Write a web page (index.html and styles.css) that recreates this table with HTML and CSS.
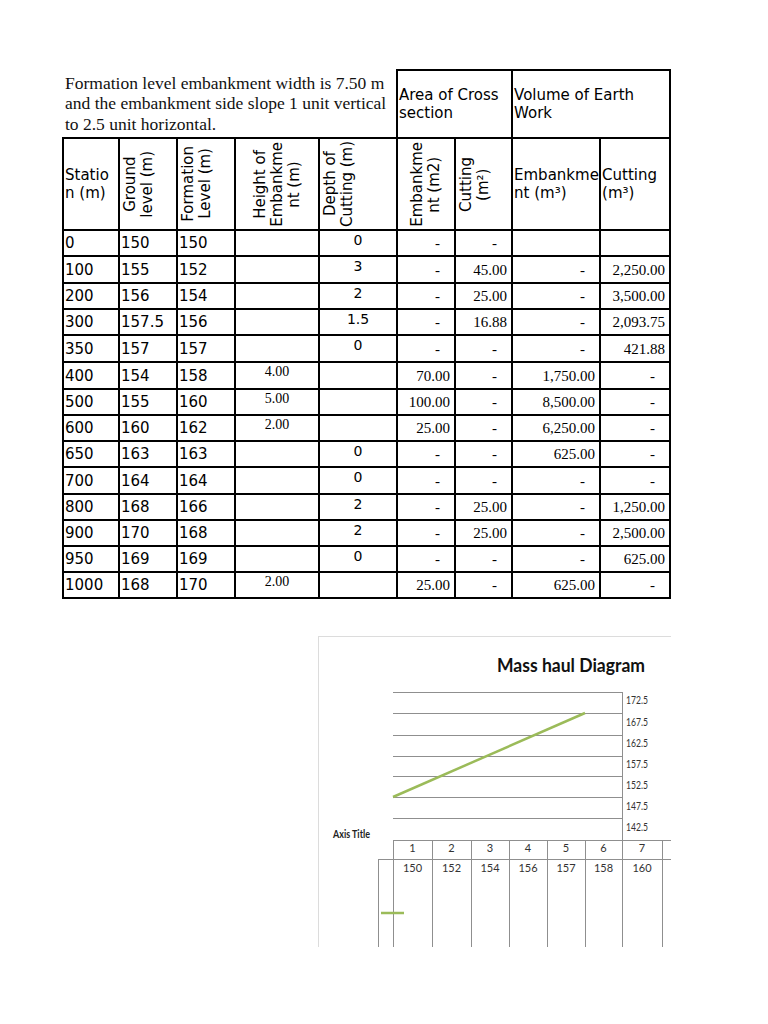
FILE: index.html
```html
<!DOCTYPE html>
<html>
<head>
<meta charset="utf-8">
<title>Mass haul</title>
<link rel="stylesheet" href="styles.css">
</head>
<body>
<table class="sheet">
  <colgroup>
    <col class="w56"><col class="w58"><col class="w58"><col class="w84"><col class="w78"><col class="w58"><col class="w57"><col class="w88"><col class="w70">
  </colgroup>
  <tr class="hrow1">
    <td colspan="5" class="note">Formation level embankment width is 7.50 m<br>and the embankment side slope 1 unit vertical<br>to 2.5 unit horizontal.</td>
    <td colspan="2" class="hd">Area of Cross<br>section</td>
    <td colspan="2" class="hd">Volume of Earth<br>Work</td>
  </tr>
  <tr class="hrow2">
    <td class="hd">Statio<br>n (m)</td>
    <td class="rot"><span class="vt">Ground<br>level (m)</span></td>
    <td class="rot"><span class="vt">Formation<br>Level (m)</span></td>
    <td class="rot mid"><span class="vt">Height of<br>Embankme<br>nt (m)</span></td>
    <td class="rot"><span class="vt">Depth of<br>Cutting (m)</span></td>
    <td class="rot mid"><span class="vt">Embankme<br>nt (m2)</span></td>
    <td class="rot"><span class="vt">Cutting<br>(m²)</span></td>
    <td class="hd">Embankme<br>nt (m³)</td>
    <td class="hd">Cutting<br>(m³)</td>
  </tr>
  <tr><td>0</td><td>150</td><td>150</td><td class="h"></td><td class="c">0</td><td class="d">-</td><td class="d">-</td><td class="n"></td><td class="n"></td></tr>
  <tr class="tall"><td>100</td><td>155</td><td>152</td><td class="h"></td><td class="c">3</td><td class="d">-</td><td class="n">45.00</td><td class="d">-</td><td class="n">2,250.00</td></tr>
  <tr><td>200</td><td>156</td><td>154</td><td class="h"></td><td class="c">2</td><td class="d">-</td><td class="n">25.00</td><td class="d">-</td><td class="n">3,500.00</td></tr>
  <tr><td>300</td><td>157.5</td><td>156</td><td class="h"></td><td class="c">1.5</td><td class="d">-</td><td class="n">16.88</td><td class="d">-</td><td class="n">2,093.75</td></tr>
  <tr class="tall"><td>350</td><td>157</td><td>157</td><td class="h"></td><td class="c">0</td><td class="d">-</td><td class="d">-</td><td class="d">-</td><td class="n">421.88</td></tr>
  <tr class="tall"><td>400</td><td>154</td><td>158</td><td class="h">4.00</td><td class="c"></td><td class="n">70.00</td><td class="d">-</td><td class="n">1,750.00</td><td class="d">-</td></tr>
  <tr><td>500</td><td>155</td><td>160</td><td class="h">5.00</td><td class="c"></td><td class="n">100.00</td><td class="d">-</td><td class="n">8,500.00</td><td class="d">-</td></tr>
  <tr><td>600</td><td>160</td><td>162</td><td class="h">2.00</td><td class="c"></td><td class="n">25.00</td><td class="d">-</td><td class="n">6,250.00</td><td class="d">-</td></tr>
  <tr><td>650</td><td>163</td><td>163</td><td class="h"></td><td class="c">0</td><td class="d">-</td><td class="d">-</td><td class="n">625.00</td><td class="d">-</td></tr>
  <tr class="tall"><td>700</td><td>164</td><td>164</td><td class="h"></td><td class="c">0</td><td class="d">-</td><td class="d">-</td><td class="d">-</td><td class="d">-</td></tr>
  <tr><td>800</td><td>168</td><td>166</td><td class="h"></td><td class="c">2</td><td class="d">-</td><td class="n">25.00</td><td class="d">-</td><td class="n">1,250.00</td></tr>
  <tr><td>900</td><td>170</td><td>168</td><td class="h"></td><td class="c">2</td><td class="d">-</td><td class="n">25.00</td><td class="d">-</td><td class="n">2,500.00</td></tr>
  <tr><td>950</td><td>169</td><td>169</td><td class="h"></td><td class="c">0</td><td class="d">-</td><td class="d">-</td><td class="d">-</td><td class="n">625.00</td></tr>
  <tr><td>1000</td><td>168</td><td>170</td><td class="h">2.00</td><td class="c"></td><td class="n">25.00</td><td class="d">-</td><td class="n">625.00</td><td class="d">-</td></tr>
</table>

<div class="chart">
  <svg class="chart-svg" width="352" height="310" viewBox="0 0 352 310">
    <text class="title" x="252" y="35" text-anchor="middle" textLength="148" lengthAdjust="spacingAndGlyphs">Mass haul Diagram</text>
    <g class="grid">
      <line x1="74" y1="55.5" x2="303" y2="55.5"/>
      <line x1="74" y1="76.5" x2="303" y2="76.5"/>
      <line x1="74" y1="98.5" x2="303" y2="98.5"/>
      <line x1="74" y1="119.5" x2="303" y2="119.5"/>
      <line x1="74" y1="139.5" x2="303" y2="139.5"/>
      <line x1="74" y1="160.5" x2="303" y2="160.5"/>
      <line x1="74" y1="181.5" x2="303" y2="181.5"/>
      <line x1="303.5" y1="55" x2="303.5" y2="310"/>
      <line x1="74" y1="203.5" x2="352" y2="203.5"/>
      <line x1="59" y1="222.5" x2="352" y2="222.5"/>
      <line x1="59.5" y1="222" x2="59.5" y2="310"/>
      <line x1="74.5" y1="203" x2="74.5" y2="310"/>
      <line x1="113.5" y1="203" x2="113.5" y2="310"/>
      <line x1="152.5" y1="203" x2="152.5" y2="310"/>
      <line x1="190.5" y1="203" x2="190.5" y2="310"/>
      <line x1="228.5" y1="203" x2="228.5" y2="310"/>
      <line x1="266.5" y1="203" x2="266.5" y2="310"/>
      <line x1="343.5" y1="203" x2="343.5" y2="310"/>
    </g>
    <line class="series" x1="74" y1="160" x2="266" y2="76"/>
    <line class="series" x1="62" y1="276" x2="85" y2="276"/>
    <g class="ylab">
      <text x="307" y="67" textLength="22" lengthAdjust="spacingAndGlyphs">172.5</text>
      <text x="307" y="89" textLength="22" lengthAdjust="spacingAndGlyphs">167.5</text>
      <text x="307" y="110" textLength="22" lengthAdjust="spacingAndGlyphs">162.5</text>
      <text x="307" y="131" textLength="22" lengthAdjust="spacingAndGlyphs">157.5</text>
      <text x="307" y="152" textLength="22" lengthAdjust="spacingAndGlyphs">152.5</text>
      <text x="307" y="173" textLength="22" lengthAdjust="spacingAndGlyphs">147.5</text>
      <text x="307" y="194" textLength="22" lengthAdjust="spacingAndGlyphs">142.5</text>
    </g>
    <text class="axis" x="14" y="201" textLength="37" lengthAdjust="spacingAndGlyphs">Axis Title</text>
    <g class="xlab">
      <text x="93.5" y="215">1</text>
      <text x="132.5" y="215">2</text>
      <text x="171" y="215">3</text>
      <text x="209" y="215">4</text>
      <text x="247" y="215">5</text>
      <text x="284.5" y="215">6</text>
      <text x="323" y="215">7</text>
      <text x="93.5" y="235">150</text>
      <text x="132.5" y="235">152</text>
      <text x="171" y="235">154</text>
      <text x="209" y="235">156</text>
      <text x="247" y="235">157</text>
      <text x="284.5" y="235">158</text>
      <text x="323" y="235">160</text>
    </g>
  </svg>
</div>
</body>
</html>
```

FILE: styles.css
```css
html, body {
  margin: 0;
  padding: 0;
  background: #fff;
}

body {
  font-family: "DejaVu Sans", sans-serif;
  color: #000;
}

.sheet {
  border-collapse: collapse;
  table-layout: fixed;
  width: 609px;
  margin: 69px 0 0 62px;
  font-family: "DejaVu Sans", sans-serif;
  font-size: 15px;
}

.w56 { width: 56px; }
.w58 { width: 58px; }
.w57 { width: 57px; }
.w84 { width: 84px; }
.w78 { width: 78px; }
.w88 { width: 88px; }
.w70 { width: 70px; }

.sheet td {
  border: 2px solid #000;
  padding: 0 1px;
  height: 24px;
  line-height: 18px;
  white-space: nowrap;
  overflow: hidden;
  vertical-align: middle;
  text-align: left;
}

.sheet tr.tall td {
  height: 25px;
}

.sheet tr.hrow1 td {
  height: 66px;
}

.sheet tr.hrow2 td {
  height: 90px;
}

.sheet td.note {
  border-top: 0 none;
  border-left: 0 none;
  padding: 0 0 0 2px;
  vertical-align: middle;
  font-family: "Liberation Serif", "Times New Roman", serif;
  font-size: 17.5px;
  line-height: 20.5px;
  color: #111;
}

.sheet td.hd {
  line-height: 18px;
}

.sheet td.rot {
  padding: 0 2px;
  text-align: left;
}

.sheet td.rot.mid {
  text-align: center;
}

.vt {
  display: inline-block;
  vertical-align: middle;
  writing-mode: vertical-rl;
  transform: rotate(180deg);
  text-align: center;
  line-height: 17px;
  white-space: nowrap;
}

.sheet td.c {
  text-align: center;
  vertical-align: top;
  padding-top: 0;
  font-size: 14px;
}

.sheet td.h {
  text-align: center;
  vertical-align: top;
  padding-top: 0;
  font-family: "Liberation Serif", "Times New Roman", serif;
  font-size: 14px;
}

.sheet td.n {
  text-align: right;
  padding-right: 4px;
  font-family: "Liberation Serif", "Times New Roman", serif;
  font-size: 15px;
}

.sheet td.d {
  text-align: right;
  padding-right: 14px;
  font-family: "Liberation Serif", "Times New Roman", serif;
  font-size: 15px;
}

.chart {
  width: 352px;
  height: 310px;
  margin: 37px 0 0 318px;
  border-top: 1px solid #dcdcdc;
  border-left: 1px solid #dcdcdc;
}

.chart-svg {
  display: block;
}

.title {
  font-family: Lato, "Open Sans", sans-serif;
  font-weight: 700;
  font-size: 19px;
  fill: #111;
}

.grid line {
  stroke: #8f8f8f;
  stroke-width: 1;
}

.series {
  stroke: #9bbb59;
  stroke-width: 2.5;
}

.ylab text {
  font-family: Lato, "Open Sans", sans-serif;
  font-size: 11px;
  fill: #333;
}

.axis {
  font-family: Lato, "Open Sans", sans-serif;
  font-weight: 700;
  font-size: 11px;
  fill: #222;
}

.xlab text {
  font-family: Lato, "Open Sans", sans-serif;
  font-size: 11px;
  fill: #333;
  text-anchor: middle;
}
```
